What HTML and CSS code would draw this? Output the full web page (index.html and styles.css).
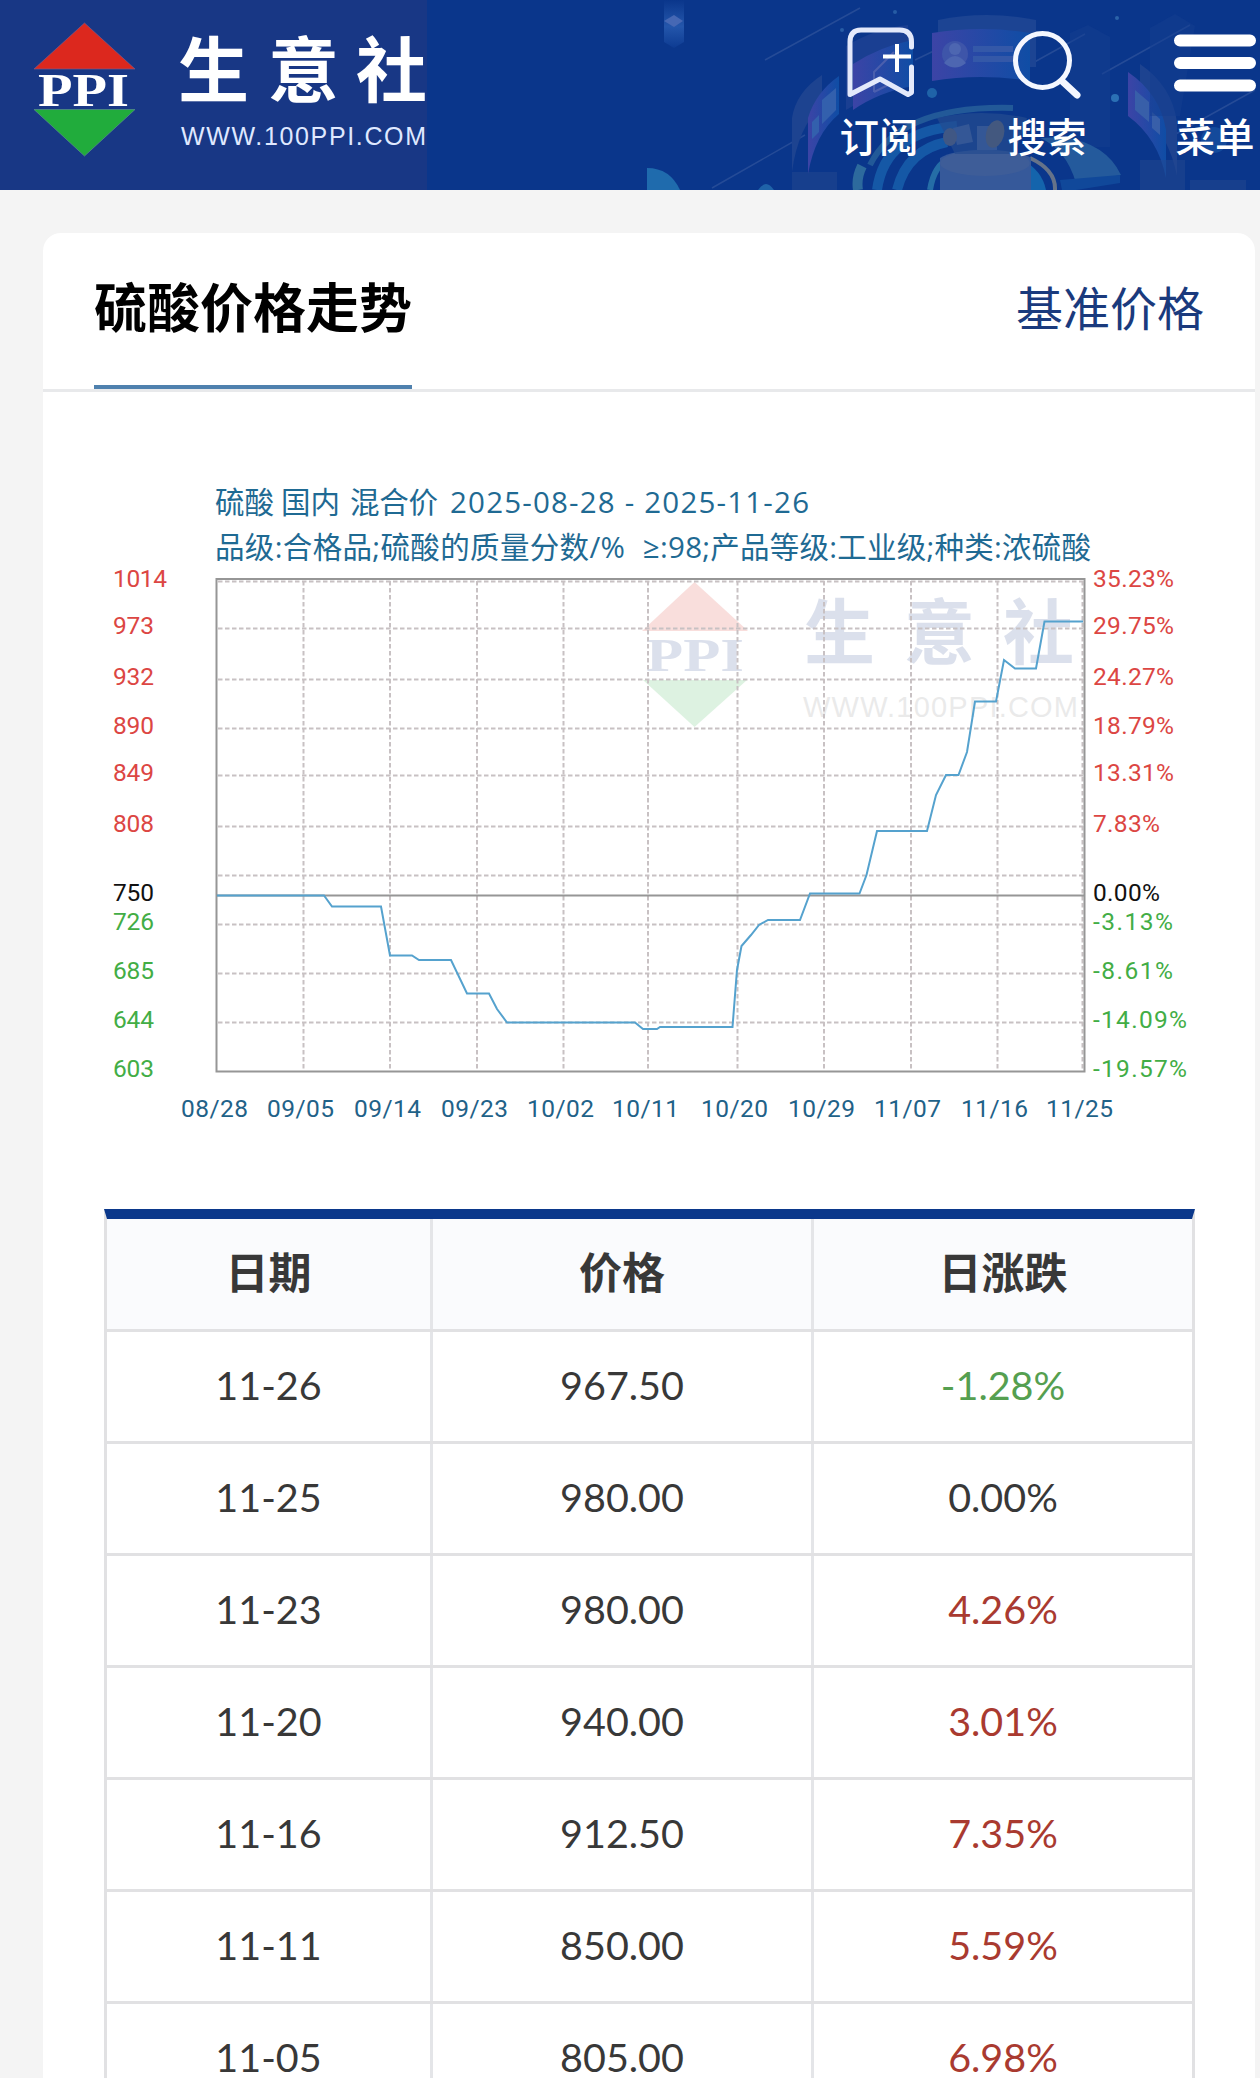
FILE: index.html
```html
<!DOCTYPE html>
<html lang="zh-CN">

<head>
  <title>硫酸价格走势 - 生意社</title>
  <meta charset="UTF-8">
  <meta name="viewport" content="width=device-width, initial-scale=1">
  <link rel="stylesheet" href="styles.css">
</head>

<body>
  <header class="header">
    <svg class="header-bg" viewBox="620 0 640 190" width="640" height="190">
      <defs>
        <linearGradient id="violet" x1="0" y1="0" x2="1" y2="0">
          <stop offset="0" stop-color="#3c44a6"/>
          <stop offset="1" stop-color="#0f4da5"/>
        </linearGradient>
        <linearGradient id="drop" x1="0" y1="0" x2="0" y2="1">
          <stop offset="0" stop-color="#0a368b"/>
          <stop offset=".55" stop-color="#2456ab"/>
          <stop offset="1" stop-color="#0d3b92"/>
        </linearGradient>
      </defs>
      <path d="M664 0h20v42l-10 6-10-6z" fill="url(#drop)"/>
      <path d="M664 21l10-6 9 6-9 6z" fill="#4668b4"/>
      <g stroke="#254b97" stroke-width="1.5" fill="none">
        <path d="M765 60L860 8M712 188L805 135M1020 70L1085 34M1102 74L1190 25M1165 140L1255 90M915 60L940 48"/>
      </g>
      <path d="M938 20q48-10 98 0v47h-98z" fill="#1c4493"/>
      <path d="M932 33q50-8 98 0v48q-50-8-98 0z" fill="url(#violet)"/>
      <circle cx="955" cy="54" r="13" fill="#3e55a9"/>
      <circle cx="955" cy="49" r="6" fill="#4d66b1"/>
      <path d="M944 63q11-14 22 0-11 9-22 0z" fill="#4d66b1"/>
      <path d="M973 46h40v6h-40zM973 56h40v6h-40z" fill="#3458a8"/>
      <path d="M846 46q30-18 62-21v60q-32 6-62 25z" fill="#1a3f92"/>
      <path d="M853 64q28-18 60-24v46q-34 6-60 24z" fill="url(#violet)"/>
      <path d="M874 92V72l20-20M874 92l18-9" fill="none" stroke="#4b5fae" stroke-width="2"/>
      <path d="M792 172V118q4-26 30-43v30q-24 22-30 67z" fill="#1d4390"/>
      <path d="M808 174V118q8-26 31-42v38q-24 20-31 60z" fill="url(#violet)"/>
      <path d="M822 100l14-12v22l-14 14zM812 122l7-7v17l-7 7z" fill="#3360ad"/>
      <path d="M1140 64q32 22 37 58v54q-8-40-37-70z" fill="#1d4390"/>
      <path d="M1128 72q32 22 38 58v48q-8-40-38-62z" fill="url(#violet)"/>
      <path d="M1135 90l14 12v20l-14-12zM1152 112l8 7v16l-8-7z" fill="#385fa9"/>
      <path d="M1070 33l18-8 22 12v110h-40zM1150 28l25-14 20 12-15 90h-30z" fill="#143d90" opacity=".5"/>
      <g fill="none">
        <path d="M870 165Q900 105 1013 108" stroke="#225998" stroke-width="6"/>
        <path d="M858 190q-2-12 4-24" stroke="#2d6a9d" stroke-width="10"/>
        <path d="M877 190q8-58 80-64M897 190q10-40 50-48" stroke="#1558a6" stroke-width="10"/>
        <path d="M930 190q4-25 20-32" stroke="#256da6" stroke-width="6"/>
        <path d="M1030 158q26 12 25 32" stroke="#667389" stroke-width="4"/>
      </g>
      <path d="M1062 137q44 6 59 38l-45 8q-10-34-36-45z" fill="#245a9c"/>
      <path d="M1060 180l60-5v8l-44 7h-14z" fill="#10489a"/>
      <path d="M1022 160q20 10 24 30h-18z" fill="#1464ac"/>
      <path d="M940 190v-32q12-8 45-8t46 8v32z" fill="#36599a"/>
      <ellipse cx="985" cy="163" rx="45" ry="13" fill="#3e5d98"/>
      <path d="M937 118q45-10 90 0l-12 36h-60z" fill="#234b90" opacity=".7"/>
      <path d="M953 128l16-4 4 18-16 3zM977 126h20v24h-20z" fill="#345796"/>
      <ellipse cx="995" cy="134" rx="9" ry="14" fill="#43587f" transform="rotate(15 995 134)"/>
      <ellipse cx="950" cy="137" rx="7" ry="9" fill="#405784"/>
      <path d="M647 190v-22q23 0 33 22z" fill="#1f6bad"/>
      <path d="M758 190q8-12 16 0z" fill="#1f63a8"/>
      <circle cx="932" cy="93" r="5" fill="#1f63a8"/>
      <circle cx="1115" cy="98" r="4" fill="#2b70b5"/>
      <circle cx="895" cy="12" r="2" fill="#265ca5"/>
      <circle cx="1117" cy="18" r="2" fill="#2b63a8"/>
      <circle cx="842" cy="30" r="2" fill="#265ca5"/>
      <circle cx="1214" cy="140" r="13" fill="#144a9b"/>
      <path d="M792 172h45v18h-45zM1140 160h45v30h-45zM1190 180h56v10h-56z" fill="#24478f" opacity=".5"/>
    </svg>

    <svg class="logo" viewBox="0 0 427 190" width="427" height="190">
      <path d="M84.5 23L135 69H34z" fill="#dc281e" stroke="#7d5a86" stroke-width=".7"/>
      <path d="M34 109.500H135L84.500 156z" fill="#21ac3c" stroke="#5a8f8c" stroke-width=".7"/>
      <text class="logo-ppi" x="38" y="105.500" textLength="91" lengthAdjust="spacingAndGlyphs">PPI</text>
      <text class="logo-name" x="178 268 356" y="95.500">生意社</text>
      <text class="logo-url" x="181" y="144.500" textLength="245">WWW.100PPI.COM</text>
    </svg>

    <nav class="nav">
      <a class="nav-item">
        <svg viewBox="0 0 90 90" width="90" height="90">
          <path d="M77.500 29V24q0-12-12-12H27q-11 0-11 12v52.500L46 61l28 15.500 3.500-2V49" fill="none" stroke="#e3e9fb" stroke-width="5" stroke-linejoin="round" stroke-linecap="round"/>
          <path d="M63 26v28M49 38.500h28" stroke="#fff" stroke-width="4"/>
        </svg>
        <span>订阅</span>
      </a>
      <a class="nav-item">
        <svg viewBox="0 0 90 90" width="90" height="90">
          <circle cx="40.500" cy="42.500" r="27" fill="none" stroke="#f4f7ff" stroke-width="5"/>
          <path d="M61 64l14 13" stroke="#f4f7ff" stroke-width="7" stroke-linecap="round"/>
        </svg>
        <span>搜索</span>
      </a>
      <a class="nav-item">
        <svg viewBox="0 0 90 90" width="90" height="90">
          <path d="M10 22.500h70M10 45h70M10 67.500h70" stroke="#fff" stroke-width="12" stroke-linecap="round"/>
        </svg>
        <span>菜单</span>
      </a>
    </nav>
  </header>

  <main class="card">
    <div class="card-head">
      <h2>硫酸价格走势</h2>
      <a class="more">基准价格</a>
    </div>

    <svg class="chart" viewBox="43 392 1212 817" width="1212" height="817">
      <!-- watermark -->
      <g opacity=".15">
        <path d="M694.500 582L748 631H642z" fill="#dc281e"/>
        <path d="M643 680H747L694.500 727z" fill="#21ac3c"/>
        <text class="logo-ppi mark" x="646" y="671" textLength="98" lengthAdjust="spacingAndGlyphs">PPI</text>
        <text class="logo-name mark" x="804 904 1003" y="658">生意社</text>
        <text class="logo-url mark-url" x="803" y="717" textLength="275">WWW.100PPI.COM</text>
      </g>

      <g class="grid">
        <path d="M218 581.500H1083M218 628.500H1083M218 679.500H1083M218 728.500H1083M218 775.500H1083M218 826.500H1083M218 875.500H1083M218 924.500H1083M218 973.500H1083M218 1022.500H1083"/>
        <path d="M303.500 581V1071M390 581V1071M477 581V1071M563.500 581V1071M648 581V1071M737.500 581V1071M824 581V1071M911 581V1071M997.500 581V1071M1082.500 581V1071"/>
      </g>
      <path class="frame" d="M216.500 579H1084.500V1071.500H216.500zM216.500 895.500H1084.500"/>
      <polyline class="line" points="217,895.500 324,895.500 332,906.500 381,906.500 390,955.500 412,955.500 419,960 451,960 467,993.500 489,993.500 497,1009 507,1022.500 635,1022.500 643,1029 657,1029 660,1027 732.500,1027 737,970 741.500,946 751,935 759,925 768,920 800,920 810,893.500 859.500,893.500 866.500,875 877,831 927,831 936,795 946,775 958.500,775 967,752 975,701.500 996,701.500 1004,660 1015,668.500 1036,668.500 1044.500,621.500 1083,621.500"/>

      <g class="caption">
        <text x="215" y="513" textLength="59">硫酸</text>
        <text x="281" y="513" textLength="59">国内</text>
        <text x="350" y="513" textLength="88">混合价</text>
        <text x="450" y="513" textLength="359">2025-08-28 - 2025-11-26</text>
        <text x="215" y="558" textLength="410">品级:合格品;硫酸的质量分数/%</text>
        <text x="643" y="558" textLength="448">≥:98;产品等级:工业级;种类:浓硫酸</text>
      </g>

      <g class="axis up">
        <text x="113" y="587" textLength="54">1014</text>
        <text x="113" y="634" textLength="41">973</text>
        <text x="113" y="685" textLength="41">932</text>
        <text x="113" y="734" textLength="41">890</text>
        <text x="113" y="781" textLength="41">849</text>
        <text x="113" y="832" textLength="41">808</text>
        <text x="1093" y="587" textLength="81">35.23%</text>
        <text x="1093" y="634" textLength="81">29.75%</text>
        <text x="1093" y="685" textLength="81">24.27%</text>
        <text x="1093" y="734" textLength="81">18.79%</text>
        <text x="1093" y="781" textLength="81">13.31%</text>
        <text x="1093" y="832" textLength="67">7.83%</text>
      </g>
      <g class="axis flat">
        <text x="113" y="901" textLength="41">750</text>
        <text x="1093" y="901" textLength="67">0.00%</text>
      </g>
      <g class="axis down">
        <text x="113" y="930" textLength="41">726</text>
        <text x="113" y="979" textLength="41">685</text>
        <text x="113" y="1028" textLength="41">644</text>
        <text x="113" y="1077" textLength="41">603</text>
        <text x="1093" y="930" textLength="80">-3.13%</text>
        <text x="1093" y="979" textLength="80">-8.61%</text>
        <text x="1093" y="1028" textLength="94">-14.09%</text>
        <text x="1093" y="1077" textLength="94">-19.57%</text>
      </g>
      <g class="axis date">
        <text x="181" y="1117" textLength="67">08/28</text>
        <text x="267" y="1117" textLength="67">09/05</text>
        <text x="354" y="1117" textLength="67">09/14</text>
        <text x="441" y="1117" textLength="67">09/23</text>
        <text x="527" y="1117" textLength="67">10/02</text>
        <text x="612" y="1117" textLength="67">10/11</text>
        <text x="701" y="1117" textLength="67">10/20</text>
        <text x="788" y="1117" textLength="67">10/29</text>
        <text x="874" y="1117" textLength="67">11/07</text>
        <text x="961" y="1117" textLength="67">11/16</text>
        <text x="1046" y="1117" textLength="67">11/25</text>
      </g>
    </svg>

    <div class="price-table">
      <div class="row row-head"><div>日期</div><div>价格</div><div>日涨跌</div></div>
      <div class="row"><div>11-26</div><div>967.50</div><div class="fall">-1.28%</div></div>
      <div class="row"><div>11-25</div><div>980.00</div><div>0.00%</div></div>
      <div class="row"><div>11-23</div><div>980.00</div><div class="rise">4.26%</div></div>
      <div class="row"><div>11-20</div><div>940.00</div><div class="rise">3.01%</div></div>
      <div class="row"><div>11-16</div><div>912.50</div><div class="rise">7.35%</div></div>
      <div class="row"><div>11-11</div><div>850.00</div><div class="rise">5.59%</div></div>
      <div class="row"><div>11-05</div><div>805.00</div><div class="rise">6.98%</div></div>
    </div>
  </main>
</body>

</html>
```
FILE: styles.css
```css
* {
  box-sizing: border-box;
}

body {
  margin: 0;
  height: 2078px;
  overflow: hidden;
  background-color: #f4f4f4;
  font-family: "Noto Sans CJK SC", sans-serif;
}

/* Header */
.header {
  position: relative;
  display: flex;
  justify-content: space-between;
  height: 190px;
  background-color: #0a368b;
  overflow: hidden;
}

/* Illustration behind the nav icons */
.header-bg {
  position: absolute;
  top: 0;
  right: 0;
}

.logo {
  display: block;
  background-color: #183785;
}

.logo-ppi {
  font: bold 46px "Liberation Serif", serif;
  fill: #fff;
}

.logo-name {
  font: bold 71px "Noto Sans CJK SC", sans-serif;
  fill: #fff;
}

.logo-url {
  font: 25px "Liberation Sans", sans-serif;
  fill: #dfe8ff;
}

.mark {
  fill: #183785;
}

.mark-url {
  font-size: 29px;
  fill: #777;
}

.nav {
  position: relative;
  display: flex;
  gap: 78px;
  padding: 18px 0 0;
}

.nav-item {
  display: flex;
  flex-direction: column;
  align-items: center;
  width: 90px;
  color: #fff;
  font-size: 39.500px;
  font-weight: 500;
  line-height: 54px;
}

.nav-item svg {
  display: block;
}

/* Card */
.card {
  width: 1212px;
  height: 1900px;
  margin: 43px 0 0 43px;
  background-color: #fff;
  border-radius: 18px 18px 0 0;
}

.card-head {
  display: flex;
  justify-content: space-between;
  height: 159px;
  padding: 0 51px;
  border-bottom: 3px solid #e8e9eb;
}

.card-head h2 {
  height: 156px;
  margin: 0;
  border-bottom: 4px solid #4f81ae;
  font-size: 53px;
  line-height: 144px;
  color: #000;
}

.more {
  font-size: 47px;
  line-height: 145px;
  color: #1a3a7d;
}

/* Chart */
.chart {
  display: block;
}

.grid path {
  fill: none;
  stroke: #c8c1c3;
  stroke-width: 2;
  stroke-dasharray: 4.500 2.500;
}

.frame {
  fill: none;
  stroke: #969696;
  stroke-width: 2;
}

.line {
  fill: none;
  stroke: #55a2ce;
  stroke-width: 2;
}

.caption text {
  font: 29.500px "Open Sans", "Noto Sans CJK SC", sans-serif;
  fill: #1f6a93;
}

.axis text {
  font: 24.500px Roboto, sans-serif;
}

.up {
  fill: #dc4643;
}

.flat {
  fill: #111;
}

.down {
  fill: #42ad45;
}

.date {
  fill: #1f6288;
}

/* Price table */
.price-table {
  width: 1091px;
  margin-left: 61px;
  border-top: 10px solid #0b388b;
  border-left: 3px solid #e1e1e3;
  border-right: 3px solid #e1e1e3;
}

.row {
  display: grid;
  grid-template-columns: 323px 381px 1fr;
  height: 112px;
  border-bottom: 3px solid #e1e1e3;
  font: 39.500px/106px Lato, sans-serif;
  text-align: center;
  color: #383838;
}

.row div + div {
  border-left: 3px solid #e4e5e8;
}

.row-head {
  height: 113px;
  background-color: #fafbfd;
  font: bold 43px/102px "Noto Sans CJK SC", sans-serif;
}

.row .rise {
  color: #a93a30;
}

.row .fall {
  color: #559f50;
}
```
